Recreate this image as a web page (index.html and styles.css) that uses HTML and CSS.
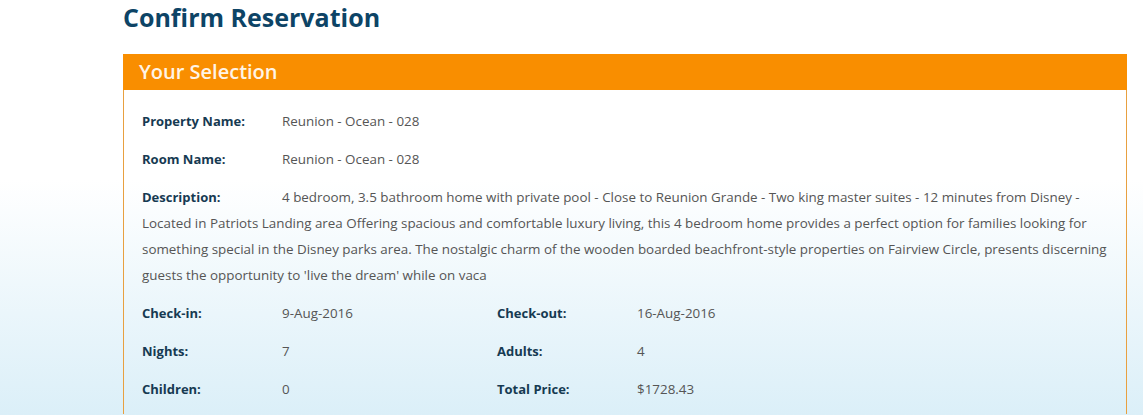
FILE: index.html
```html
<!DOCTYPE html>
<html>
<head>
<meta charset="utf-8">
<link rel="stylesheet" href="styles.css">
</head>
<body>
<div class="page">
  <h1 class="title">Confirm Reservation</h1>
  <div class="panel">
    <div class="panel-head">Your Selection</div>
    <div class="panel-body">
      <div class="row"><span class="label">Property Name:</span><span class="value">Reunion - Ocean - 028</span></div>
      <div class="row"><span class="label">Room Name:</span><span class="value">Reunion - Ocean - 028</span></div>
      <div class="row desc"><span class="label">Description:</span>4 bedroom, 3.5 bathroom home with private pool - Close to Reunion Grande - Two king master suites - 12 minutes from Disney - Located in Patriots Landing area Offering spacious and comfortable luxury living, this 4 bedroom home provides a perfect option for families looking for something special in the Disney parks area. The nostalgic charm of the wooden boarded beachfront-style properties on Fairview Circle, presents discerning guests the opportunity to 'live the dream' while on vaca</div>
      <div class="grid">
        <div class="row"><span class="label">Check-in:</span><span class="value">9-Aug-2016</span></div>
        <div class="row"><span class="label">Check-out:</span><span class="value">16-Aug-2016</span></div>
        <div class="row"><span class="label">Nights:</span><span class="value">7</span></div>
        <div class="row"><span class="label">Adults:</span><span class="value">4</span></div>
        <div class="row"><span class="label">Children:</span><span class="value">0</span></div>
        <div class="row"><span class="label">Total Price:</span><span class="value">$1728.43</span></div>
      </div>
    </div>
  </div>
</div>
</body>
</html>
```
FILE: styles.css
```css
html, body {
  margin: 0;
  padding: 0;
}
body {
  min-height: 415px;
  background: linear-gradient(to bottom, #ffffff 0px, #ffffff 180px, #dbeff8 415px);
  font-family: "Open Sans", "DejaVu Sans", sans-serif;
  overflow: hidden;
}
.page {
  padding-left: 123px;
  padding-right: 16px;
}
.title {
  margin: 0;
  padding-top: 1px;
  height: 53px;
  font-size: 25px;
  line-height: 32px;
  font-weight: bold;
  color: #0d4466;
}
.panel {
  border-left: 1px solid #e8a040;
  border-right: 1px solid #e8a040;
  width: 1002px;
}
.panel-head {
  background: #f98e00;
  color: #fff4e6;
  height: 36px;
  line-height: 36px;
  font-size: 20px;
  font-weight: 600;
  padding-left: 16px;
  margin: 0 -1px;
}
.panel-body {
  padding: 18px 14px 0 18px;
}
.row {
  font-size: 13.4px;
  line-height: 26px;
  color: #555555;
  margin-bottom: 12px;
}
.label {
  display: inline-block;
  width: 140px;
  font-weight: bold;
  font-size: 13px;
  color: #163a52;
  vertical-align: top;
}
.grid {
  display: grid;
  grid-template-columns: 355px 1fr;
}
```
